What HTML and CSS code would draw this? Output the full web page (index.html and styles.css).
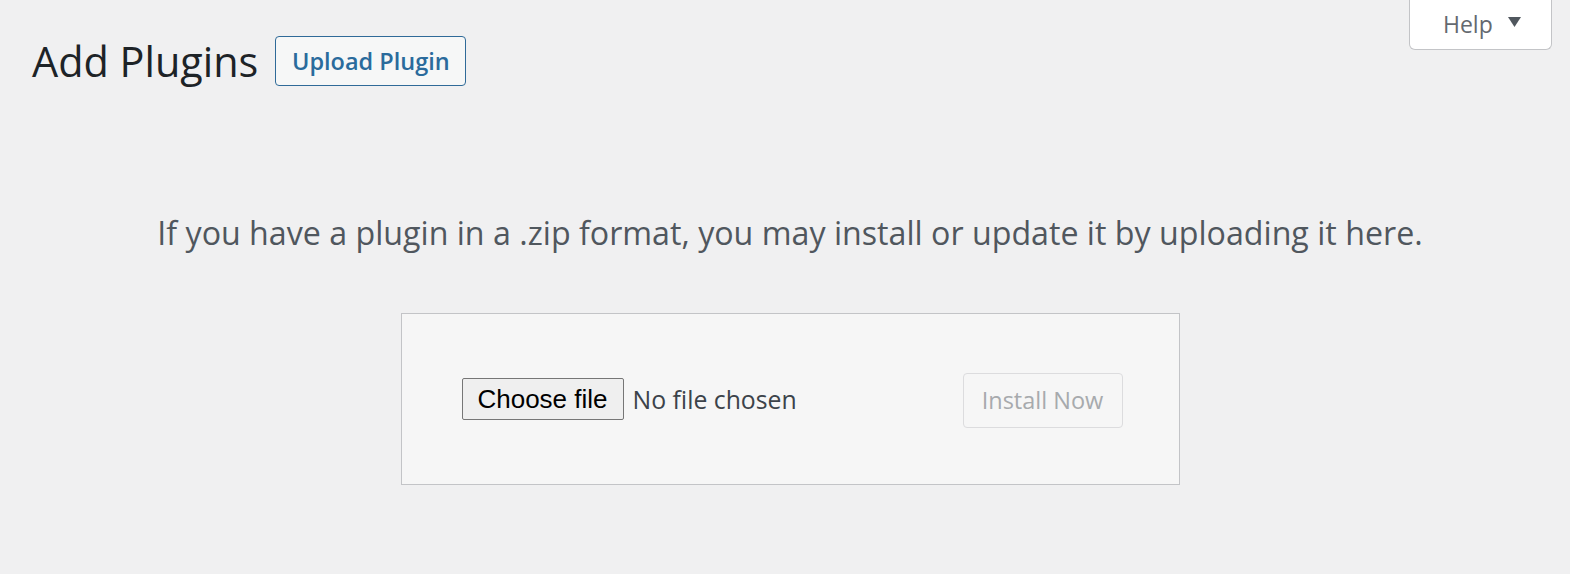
FILE: index.html
```html
<!DOCTYPE html>
<html>
<head>
<meta charset="utf-8">
<link rel="stylesheet" href="styles.css">
</head>
<body>
<div class="topbar">
  <div class="title-row">
    <h1 class="page-title">Add Plugins</h1>
    <a class="title-action">Upload Plugin</a>
  </div>
  <div class="help-tab">
    <span class="help-label">Help</span>
    <svg class="help-arrow" width="13" height="10" viewBox="0 0 13 10"><polygon points="0,0 13,0 6.5,10" fill="#50575e"/></svg>
  </div>
</div>
<div class="content">
  <p class="install-help">If you have a plugin in a .zip format, you may install or update it by uploading it here.</p>
  <div class="upload-box">
    <div class="file-field">
      <button class="file-btn" type="button">Choose file</button>
      <span class="file-name">No file chosen</span>
    </div>
    <button class="install-btn" type="button" disabled>Install Now</button>
  </div>
</div>
</body>
</html>
```
FILE: styles.css
```css
html, body {
  margin: 0;
  padding: 0;
  background: #f0f0f1;
  font-family: "Open Sans", "Noto Sans", sans-serif;
  color: #3c434a;
}
.topbar {
  display: flex;
  justify-content: space-between;
  align-items: flex-start;
  padding: 0 18px 0 32px;
}
.title-row {
  display: flex;
  align-items: center;
  margin-top: 36px;
}
.page-title {
  margin: 0;
  font-size: 41.4px;
  font-weight: 400;
  line-height: 50px;
  color: #1d2327;
}
.title-action {
  margin-left: 17px;
  box-sizing: border-box;
  height: 50px;
  width: 191px;
  display: flex;
  align-items: center;
  justify-content: center;
  border: 1px solid #2f6a98;
  border-radius: 4px;
  background: #f6f7f7;
  color: #2a6b9c;
  font-size: 23.5px;
  font-weight: 600;
}
.help-tab {
  box-sizing: border-box;
  width: 143px;
  height: 50px;
  background: #fff;
  border: 1px solid #c3c4c7;
  border-top: none;
  border-radius: 0 0 6px 6px;
  display: flex;
  align-items: center;
  padding: 0 0 2px 33px;
  gap: 15px;
}
.help-label {
  font-size: 23px;
  color: #646970;
}
.help-arrow {
  display: block;
  margin-top: -3px;
}
.content {
  padding: 0 22px 0 32px;
  display: flex;
  flex-direction: column;
  align-items: center;
}
.install-help {
  margin: 125px 0 0;
  font-size: 32.2px;
  line-height: 44px;
  color: #50575e;
  text-align: center;
  white-space: nowrap;
}
.upload-box {
  margin-top: 58px;
  box-sizing: border-box;
  width: 779px;
  height: 172px;
  background: #f6f6f6;
  border: 1px solid #c3c4c7;
  display: flex;
  align-items: center;
  justify-content: space-between;
  padding: 0 56px 0 60px;
}
.file-field {
  display: flex;
  align-items: center;
  gap: 9px;
}
.file-btn {
  box-sizing: border-box;
  height: 42px;
  width: 162px;
  padding: 0;
  background: #efefef;
  border: 1px solid #767676;
  border-radius: 2px;
  font-family: "Liberation Sans", Arial, sans-serif;
  font-size: 26px;
  color: #000;
}
.file-name {
  font-size: 24.8px;
  color: #3c434a;
}
.install-btn {
  box-sizing: border-box;
  width: 160px;
  height: 55px;
  margin-top: 2px;
  background: #f6f6f6;
  border: 1px solid #dcdcde;
  border-radius: 4px;
  font-family: "Open Sans", "Noto Sans", sans-serif;
  font-size: 23.5px;
  color: #a7aaad;
}
```
